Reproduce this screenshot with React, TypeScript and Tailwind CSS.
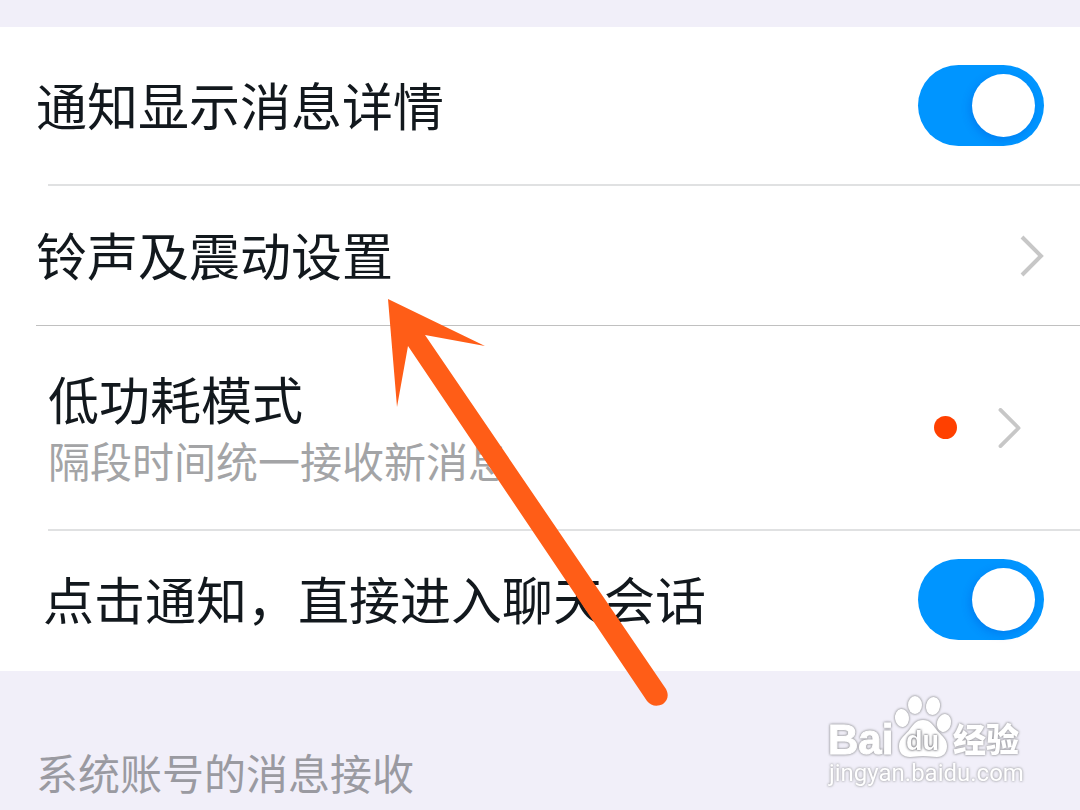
import React, { useState } from 'react';

interface SwitchRowProps {
  id: string;
  label: string;
  className: string;
}

/** Row with a label on the left and an on/off switch on the right. */
const SwitchRow: React.FC<SwitchRowProps> = ({ id, label, className }) => {
  const [checked, setChecked] = useState(true);

  return (
    <div className={`flex items-center justify-between gap-6 pr-9 ${className}`}>
      <label htmlFor={id} className="pb-[3px] text-[51px] leading-[70px] text-[#12181d]">
        {label}
      </label>
      <input
        id={id}
        type="checkbox"
        role="switch"
        checked={checked}
        onChange={(e) => setChecked(e.target.checked)}
        className="flex h-[81px] w-[126px] shrink-0 cursor-pointer appearance-none items-center rounded-full bg-[#d5d5da] px-[9px] before:block before:size-[63px] before:rounded-full before:bg-white before:shadow-[-2px_3px_8px_rgba(0,60,200,0.25)] before:content-[''] checked:justify-end checked:bg-[#0095ff]"
      />
    </div>
  );
};

const Chevron: React.FC<{ rounded?: boolean; className: string }> = ({ rounded, className }) => (
  <svg viewBox="0 0 24 42" fill="none" className={`shrink-0 ${className}`} aria-hidden="true">
    <path
      d="M2 2 21 21 2 40"
      stroke="#c7c7c7"
      strokeWidth="4"
      strokeLinecap={rounded ? 'round' : 'butt'}
      strokeLinejoin={rounded ? 'round' : 'miter'}
    />
  </svg>
);

const Divider: React.FC = () => <div className="ml-12 h-[2px] bg-[#e0e1e2]" />;

/** Pointer laid over the list, aimed at the ringtone row. */
const PointerArrow: React.FC = () => (
  <svg
    viewBox="0 0 282 408"
    className="pointer-events-none absolute top-[299px] left-[387px] h-[408px] w-[282px]"
    aria-hidden="true"
  >
    <path
      d="M1 0 98 47 38 36 279 390C282 396 281 401 276 405 270 408 264 407 260 402L21 47 10 108Z"
      fill="#ff5d17"
    />
  </svg>
);

const Watermark: React.FC = () => (
  <svg
    viewBox="0 0 200 100"
    className="absolute right-[54px] bottom-[18px] h-[100px] w-[200px]"
    fill="#fff"
  >
    <g className="[filter:drop-shadow(0_0_1px_#9a9a9f)_drop-shadow(0_0_1px_#b8b8bc)]">
      <text
        x="2"
        y="62"
        fontSize="42"
        fontWeight="700"
        fontFamily="Liberation Sans, sans-serif"
        stroke="#fff"
        strokeWidth="1"
      >
        Bai
      </text>
      <ellipse cx="76" cy="26" rx="7" ry="9" transform="rotate(-8 76 26)" />
      <ellipse cx="89" cy="13" rx="7" ry="9" />
      <ellipse cx="107" cy="14" rx="7" ry="9" transform="rotate(10 107 14)" />
      <ellipse cx="118" cy="31" rx="7" ry="9" transform="rotate(14 118 31)" />
      <path d="M97 28c-7 0-10 5-13 9-4 6-11 9-11 17 0 7 4 11 11 11 5 0 8-1 13-1s9 1 14 1c6 0 10-4 10-11 0-8-7-11-11-17-3-4-6-9-13-9Z" />
      <text
        x="127"
        y="60"
        fontSize="33"
        fontWeight="900"
        fontFamily="Liberation Sans, Noto Sans CJK SC, sans-serif"
      >
        经验
      </text>
    </g>
    <text
      x="80"
      y="58"
      fontSize="27"
      fontWeight="700"
      fontFamily="Liberation Sans, sans-serif"
      className="[filter:drop-shadow(0_0_1px_#77777d)_drop-shadow(0_0_1px_#a0a0a5)]"
    >
      du
    </text>
    <text
      x="3"
      y="89"
      fontSize="24"
      fontFamily="Roboto, sans-serif"
      className="[filter:drop-shadow(0_0_1px_#a8a8ae)_drop-shadow(0_0_1px_#c8c8cc)]"
    >
      jingyan.baidu.com
    </text>
  </svg>
);

export default function App() {
  return (
    <div className="relative min-h-screen bg-[#f1eff9] pt-[27px] font-['Noto_Sans_CJK_SC',sans-serif]">
      <main className="bg-white">
        <SwitchRow id="show-detail" label="通知显示消息详情" className="py-[38px] pl-9" />
        <Divider />

        <button
          type="button"
          className="flex w-full cursor-pointer items-center justify-between py-[33px] pr-9 pl-9 text-left"
        >
          <span className="pb-[3px] text-[51px] leading-[70px] text-[#12181d]">铃声及震动设置</span>
          <Chevron className="h-[42px] w-6" />
        </button>
        <div className="ml-9 h-px bg-[#c0c0c0]" />

        <button
          type="button"
          className="flex w-full cursor-pointer items-center justify-between py-[37px] pr-[58px] pl-12 text-left"
        >
          <span className="flex flex-col pb-[6px]">
            <span className="text-[51px] leading-[70px] text-[#12181d]">低功耗模式</span>
            <span className="text-[42px] leading-[53px] text-[#a3a4a6]">隔段时间统一接收新消息</span>
          </span>
          <span className="flex items-center gap-[41px]">
            <span className="size-[23px] rounded-full bg-[#ff4000]" />
            <Chevron rounded className="h-10 w-6" />
          </span>
        </button>
        <Divider />

        <SwitchRow id="open-chat" label="点击通知，直接进入聊天会话" className="pt-7 pb-[31px] pl-[43px]" />
      </main>

      <footer className="relative h-[139px] pt-[71px] pl-9">
        <h2 className="text-[42px] leading-[60px] text-[#9a9aa1]">系统账号的消息接收</h2>
        <Watermark />
      </footer>

      <PointerArrow />
    </div>
  );
}
